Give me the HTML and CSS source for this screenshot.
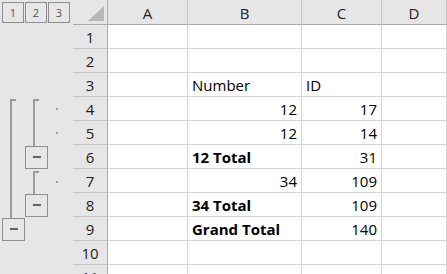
FILE: index.html
```html
<!DOCTYPE html>
<html>
<head>
    <title>Outline subtotals</title>
    <meta name="viewport" content="width=device-width, initial-scale=1">
    <link rel="stylesheet" href="styles.css">
</head>
<body>

<div class="sheet">
    <!-- outline level buttons -->
    <div class="levels">
        <span class="lvl">1</span>
        <span class="lvl">2</span>
        <span class="lvl">3</span>
    </div>
    <div class="corner"><span class="tri"></span></div>
    <div class="colhead">A</div>
    <div class="colhead">B</div>
    <div class="colhead">C</div>
    <div class="colhead">D</div>

    <!-- outline bars -->
    <div class="outline">
        <svg width="73" height="250" viewBox="0 0 73 250">
            <g fill="#9c9c9c">
                <rect x="10" y="74" width="2" height="120"/>
                <rect x="10" y="74" width="6" height="2"/>
                <rect x="33" y="74" width="2" height="48"/>
                <rect x="33" y="74" width="6" height="2"/>
                <rect x="33" y="146" width="2" height="24"/>
                <rect x="33" y="146" width="6" height="2"/>
                <rect x="56" y="83" width="2" height="2"/>
                <rect x="56" y="107" width="2" height="2"/>
                <rect x="56" y="156" width="2" height="2"/>
            </g>
            <g fill="#e6e6e6" stroke="#8e8e8e" stroke-width="1">
                <rect x="25.5" y="121.5" width="22" height="22"/>
                <rect x="25.5" y="169.5" width="22" height="22"/>
                <rect x="2.5" y="193.5" width="22" height="22"/>
            </g>
            <g fill="#666">
                <rect x="33" y="131" width="8" height="2"/>
                <rect x="33" y="179" width="8" height="2"/>
                <rect x="10" y="203" width="8" height="2"/>
            </g>
        </svg>
    </div>

    <div class="rowhead">1</div>
    <div class="cell"></div><div class="cell"></div><div class="cell"></div><div class="cell"></div>

    <div class="rowhead">2</div>
    <div class="cell"></div><div class="cell"></div><div class="cell"></div><div class="cell"></div>

    <div class="rowhead">3</div>
    <div class="cell"></div><div class="cell">Number</div><div class="cell">ID</div><div class="cell"></div>

    <div class="rowhead">4</div>
    <div class="cell"></div><div class="cell num">12</div><div class="cell num">17</div><div class="cell"></div>

    <div class="rowhead">5</div>
    <div class="cell"></div><div class="cell num">12</div><div class="cell num">14</div><div class="cell"></div>

    <div class="rowhead">6</div>
    <div class="cell"></div><div class="cell bold">12 Total</div><div class="cell num">31</div><div class="cell"></div>

    <div class="rowhead">7</div>
    <div class="cell"></div><div class="cell num">34</div><div class="cell num">109</div><div class="cell"></div>

    <div class="rowhead">8</div>
    <div class="cell"></div><div class="cell bold">34 Total</div><div class="cell num">109</div><div class="cell"></div>

    <div class="rowhead">9</div>
    <div class="cell"></div><div class="cell bold">Grand Total</div><div class="cell num">140</div><div class="cell"></div>

    <div class="rowhead">10</div>
    <div class="cell"></div><div class="cell"></div><div class="cell"></div><div class="cell"></div>

    <div class="rowhead">11</div>
    <div class="cell"></div><div class="cell"></div><div class="cell"></div><div class="cell"></div>
</div>

</body>
</html>
```

FILE: styles.css
```css
/* page */
html, body {
    margin: 0;
    padding: 0;
    background: #ffffff;
    overflow: hidden;
}

/* whole sheet grid */
.sheet {
    display: grid;
    grid-template-columns: 73px 35px 80px 114px 80px 1fr;
    grid-template-rows: 25px repeat(11, 24px);
    width: 447px;
    height: 274px;
    overflow: hidden;
    font-family: "Open Sans", Lato, sans-serif;
    font-size: 15px;
    color: #000;
}

/* outline level buttons 1 2 3 */
.levels {
    background: #e6e6e6;
    display: flex;
    gap: 1px;
    padding: 2px 0 0 2px;
    box-sizing: border-box;
}

.lvl {
    width: 22px;
    height: 21px;
    border: 1px solid #8e8e8e;
    box-sizing: border-box;
    font-size: 11px;
    color: #555;
    display: flex;
    align-items: center;
    justify-content: center;
}

/* outline area */
.outline {
    grid-column: 1;
    grid-row: 2 / span 11;
    background: #e6e6e6;
}

.outline svg {
    display: block;
}

/* top left corner */
.corner {
    background: #e6e6e6;
    border-right: 1px solid #ababab;
    border-bottom: 1px solid #ababab;
    box-sizing: border-box;
    position: relative;
}

.tri {
    position: absolute;
    right: 3px;
    bottom: 3px;
    width: 0;
    height: 0;
    border-left: 16px solid transparent;
    border-bottom: 15px solid #b7b7b7;
}

/* column headers */
.colhead {
    background: #e6e6e6;
    border-right: 1px solid #c4c4c4;
    border-bottom: 1px solid #ababab;
    box-sizing: border-box;
    display: flex;
    align-items: center;
    justify-content: center;
    color: #222;
    padding-top: 1px;
}

/* row headers */
.rowhead {
    grid-column: 2;
    background: #e6e6e6;
    border-right: 1px solid #ababab;
    border-bottom: 1px solid #c4c4c4;
    box-sizing: border-box;
    text-align: center;
    line-height: 21px;
    padding-top: 2px;
    color: #222;
}

/* cells */
.cell {
    border-right: 1px solid #d4d4d4;
    border-bottom: 1px solid #d4d4d4;
    box-sizing: border-box;
    line-height: 21px;
    padding: 2px 4px 0 4px;
    white-space: nowrap;
}

.num {
    text-align: right;
}

.bold {
    font-weight: bold;
}
```
